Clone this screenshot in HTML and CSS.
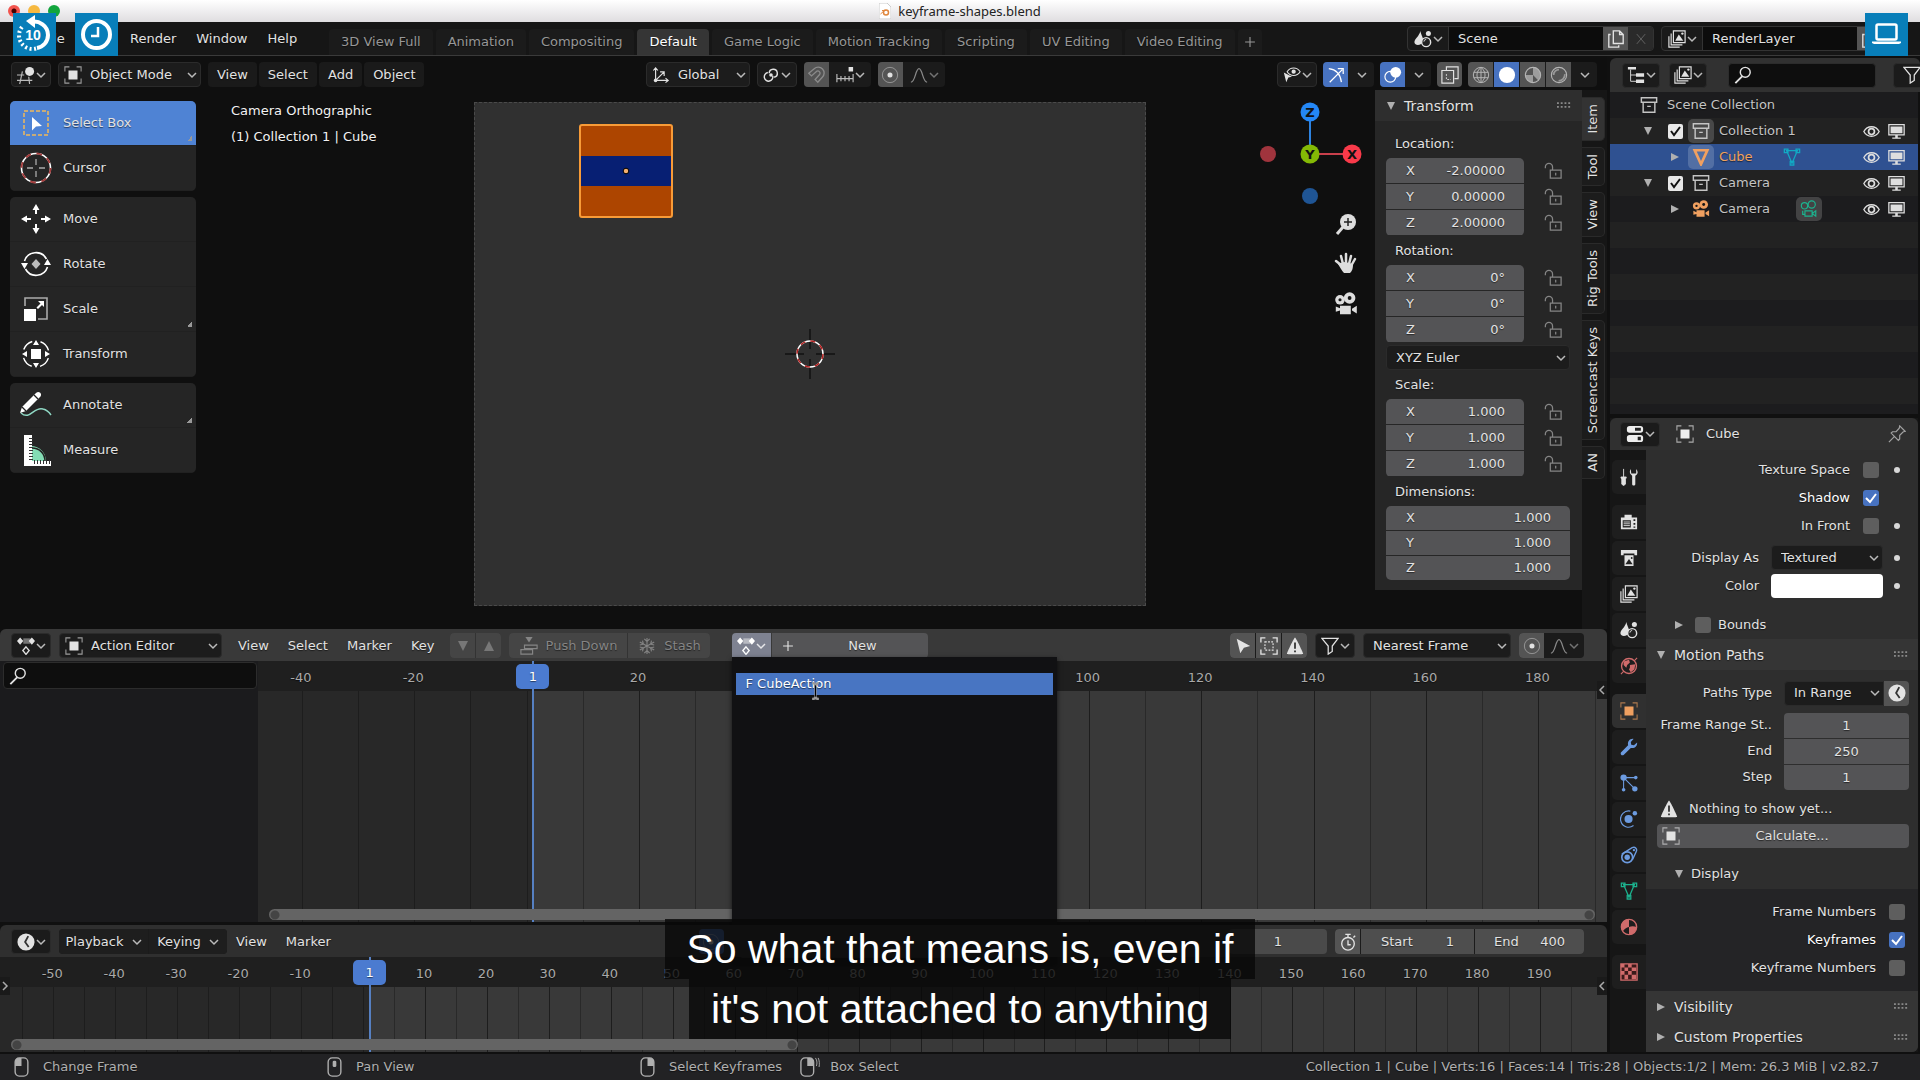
FILE: index.html
```html
<!DOCTYPE html>
<html lang="en">
<head>
<meta charset="utf-8">
<title>keyframe-shapes.blend</title>
<link rel="stylesheet" href="styles.css">
</head>
<body>
<svg class="defs" aria-hidden="true">
  <symbol id="chev" viewBox="0 0 10 10"><path d="M1 3l4 4 4-4" fill="none" stroke="currentColor" stroke-width="1.5"/></symbol>
  <symbol id="object" viewBox="0 0 20 20"><path d="M1 6V1h5M14 1h5v5M19 14v5h-5M6 19H1v-5" fill="none" stroke="currentColor" stroke-width="1.2" opacity=".65"/><path d="M5 5h10v10H5z" fill="currentColor"/></symbol>
  <symbol id="view3d" viewBox="0 0 20 20"><path d="M0 10h8M0 16h17M6 6L3 20M13 12l1 8" fill="none" stroke="currentColor" stroke-width="1.3" opacity=".8"/><circle cx="14" cy="6" r="5" fill="currentColor"/></symbol>
  <symbol id="dope" viewBox="0 0 20 20"><path d="M7 1.500h8v6H7z" fill="currentColor" opacity=".45"/><path d="M3.500.5L7 4.500l-3.500 4L0 4.500zM16.500.5l3.500 4-3.500 4-3.500-4z" fill="currentColor"/><path d="M10 11l3.500 4-3.500 4.300L6.500 15z" fill="none" stroke="currentColor" stroke-width="1.500"/></symbol>
  <symbol id="clock" viewBox="0 0 20 20"><circle cx="10" cy="10" r="9.500" fill="currentColor"/><path d="M12.500 3.500L9 10l4 5.500" fill="none" stroke="#333" stroke-width="2"/></symbol>
  <symbol id="axes" viewBox="0 0 20 20"><path d="M4 3v13h13M4 16l9-9M1.500 5L4 2l2.500 3M15 13.500l3 2.500-3 2.500M9 6.500h4.500V11" fill="none" stroke="currentColor" stroke-width="1.300"/><circle cx="4" cy="16" r="2" fill="currentColor"/></symbol>
  <symbol id="pivot" viewBox="0 0 20 20"><path d="M8 8a4.500 4.500 0 1 1 5.500 4.500M12 11a4.800 4.800 0 1 1-5.500-3.700" fill="none" stroke="currentColor" stroke-width="1.600"/><circle cx="10" cy="10" r="2" fill="currentColor"/></symbol>
  <symbol id="magnet" viewBox="0 0 20 20"><path d="M2 8l6-5a6.500 6.500 0 0 1 9 9.500L12 18l-3-3 5-5.500a2.500 2.500 0 0 0-3.500-3.500L5 11z" fill="none" stroke="currentColor" stroke-width="1.500"/></symbol>
  <symbol id="snapinc" viewBox="0 0 20 20"><path d="M1 9v9M19 9v9M1 14h18M5.500 11v6M10 11v6M14.500 11v6" fill="none" stroke="currentColor" stroke-width="1.300" opacity=".8"/><path d="M14 1h5v5h-5z" fill="currentColor"/></symbol>
  <symbol id="prop" viewBox="0 0 20 20"><circle cx="10" cy="10" r="8.500" fill="none" stroke="currentColor" opacity=".5"/><circle cx="10" cy="10" r="2.800" fill="currentColor"/></symbol>
  <symbol id="smooth" viewBox="0 0 20 20"><path d="M1 18c5 0 5-15 9-15s4 15 9 15" fill="none" stroke="currentColor" stroke-width="1.400"/></symbol>
  <symbol id="eye" viewBox="0 0 20 20"><path d="M1 10c4-7.500 14-7.500 18 0-4 7.500-14 7.500-18 0z" fill="none" stroke="currentColor" stroke-width="1.600"/><circle cx="10" cy="10" r="3.500" fill="none" stroke="currentColor" stroke-width="2"/></symbol>
  <symbol id="vis" viewBox="0 0 22 20"><path d="M5 6c4-6 12-6 16 0-4 6-12 6-16 0z" fill="none" stroke="currentColor" stroke-width="1.300"/><circle cx="13" cy="6" r="2.600" fill="currentColor"/><path d="M1 7l10 5-4.500 1L4 19z" fill="currentColor"/></symbol>
  <symbol id="gizmo" viewBox="0 0 20 20"><path d="M2 3c9 1 13 7 14 15M3 18L17 4M12 3h6v6" fill="none" stroke="currentColor" stroke-width="1.400"/></symbol>
  <symbol id="overlay" viewBox="0 0 20 20"><circle cx="13" cy="7" r="6" fill="currentColor"/><circle cx="7" cy="12" r="6" fill="none" stroke="currentColor" stroke-width="1.300"/></symbol>
  <symbol id="xray" viewBox="0 0 20 20"><path d="M6 5V1h13v13h-4M1 5h13v14H1z" fill="none" stroke="currentColor" stroke-width="1.300"/><path d="M6 9v6h5" fill="none" stroke="currentColor" stroke-dasharray="2 1.500"/></symbol>
  <symbol id="wire" viewBox="0 0 20 20"><g fill="none" stroke="currentColor" stroke-width="1.100"><circle cx="10" cy="10" r="8.500"/><path d="M2 7h16M2 13h16M10 1.500v17M10 1.500c-6 5-6 12 0 17M10 1.500c6 5 6 12 0 17"/></g></symbol>
  <symbol id="solid" viewBox="0 0 20 20"><circle cx="10" cy="10" r="9" fill="currentColor"/></symbol>
  <symbol id="matsh" viewBox="0 0 20 20"><circle cx="10" cy="10" r="8.500" fill="none" stroke="currentColor" stroke-width="1.200"/><path d="M10 1.500V10H1.500A8.500 8.500 0 0 0 10 18.500V10l6 6a8.500 8.500 0 0 0-6-14.500z" fill="currentColor" opacity=".75"/></symbol>
  <symbol id="rend" viewBox="0 0 20 20"><circle cx="10" cy="10" r="8.500" fill="none" stroke="currentColor" stroke-width="1.200"/><path d="M4 10a6 6 0 0 1 6-6M16.500 9a7 7 0 0 1-7 7.500" fill="none" stroke="currentColor" stroke-width="2" opacity=".7"/></symbol>
  <symbol id="scene" viewBox="0 0 20 20"><path d="M7 1c1 5 4 8 3 12s-9 5-9.500 1C0 10 6 7 7 1z" fill="currentColor"/><circle cx="16" cy="4" r="2.800" fill="currentColor"/><circle cx="13.500" cy="13.500" r="5" fill="#222" stroke="currentColor" stroke-width="1.600"/><path d="M11 13a2.500 2.500 0 0 1 2.500-2.500" fill="none" stroke="currentColor"/></symbol>
  <symbol id="copy" viewBox="0 0 20 20"><path d="M7 1h7l4 4v10H7zM14 1v4h4M4 5H2v14h11v-2" fill="none" stroke="currentColor" stroke-width="1.500"/></symbol>
  <symbol id="x" viewBox="0 0 20 20"><path d="M4 3l12 14M16 3L4 17" stroke="currentColor" stroke-width="1.300"/></symbol>
  <symbol id="plus" viewBox="0 0 20 20"><path d="M10 3v14M3 10h14" stroke="currentColor" stroke-width="1.600"/></symbol>
  <symbol id="layers" viewBox="0 0 20 20"><path d="M6 1h13v13H6zM3.500 4v12.500H16M1 7v12h12" fill="none" stroke="currentColor" stroke-width="1.300"/><path d="M8 12l4-7 5 7z" fill="currentColor"/><circle cx="16" cy="4" r="1.300" fill="currentColor"/></symbol>
  <symbol id="tree" viewBox="0 0 20 20"><path d="M1 1h9v3H1zM10 8h9v4h-9zM10 15h9v4h-9z" fill="currentColor"/><path d="M4 4v13h6M4 10h6" fill="none" stroke="currentColor"/></symbol>
  <symbol id="search" viewBox="0 0 20 20"><circle cx="12.500" cy="7" r="5.500" fill="none" stroke="currentColor" stroke-width="1.600"/><path d="M9 11.500L1.500 19" stroke="currentColor" stroke-width="2"/></symbol>
  <symbol id="funnel" viewBox="0 0 20 20"><path d="M1 1.500h18L12.500 10v6L8 19v-9z" fill="none" stroke="currentColor" stroke-width="1.400"/></symbol>
  <symbol id="coll" viewBox="0 0 20 20"><path d="M1.500 2h17v5h-17zM3.500 7v11h13V7M8 11.500h4" fill="none" stroke="currentColor" stroke-width="1.600"/></symbol>
  <symbol id="meshobj" viewBox="0 0 20 20"><path d="M3 2.500h14L10 18z" fill="none" stroke="currentColor" stroke-width="3"/></symbol>
  <symbol id="meshdata" viewBox="0 0 20 20"><path d="M4 3h12L10 17zM1.500 1.200h4v4h-4zM14.500 1.200h4v4h-4zM8 15h4v4H8z" fill="none" stroke="currentColor" stroke-width="1.400"/></symbol>
  <symbol id="cam" viewBox="0 0 20 20"><circle cx="5" cy="6.500" r="4" fill="currentColor"/><circle cx="13" cy="5" r="4.800" fill="currentColor"/><path d="M5 11.500h9V18.500H5v-3l-3.500 1v-4.500l3.500 1.500zM15 14l4-2.500V18l-4-2.500z" fill="currentColor"/><circle cx="5" cy="6.500" r="1.300" fill="#151515"/><circle cx="13" cy="5" r="1.600" fill="#151515"/></symbol>
  <symbol id="camdata" viewBox="0 0 20 20"><g fill="none" stroke="currentColor" stroke-width="1.300"><circle cx="5" cy="6.500" r="3.500"/><circle cx="13" cy="5" r="4"/><path d="M5.500 12h8v6h-8zM13.500 15l4-3v6zM3 12v4h2.500"/></g></symbol>
  <symbol id="monitor" viewBox="0 0 20 20"><path d="M1 2h18v12H1z" fill="none" stroke="currentColor" stroke-width="1.500"/><path d="M3 4h14v8H3zM8.500 14h3v3h-3zM5 17h10v1.500H5z" fill="currentColor"/></symbol>
  <symbol id="props" viewBox="0 0 20 20"><rect x="1" y="1" width="18" height="7.500" rx="3" fill="currentColor"/><rect x="1" y="11" width="18" height="8" rx="3" fill="currentColor"/><path d="M10 3h6.500v3.500H10zM13 13h3.500v4H13z" fill="#222"/></symbol>
  <symbol id="pin" viewBox="0 0 20 20"><path d="M1 19l6-6M13 1l6 6-2 .5-4 4 0 4-1.500 1.500-8-8L5 7.500h4l3.500-4z" fill="none" stroke="currentColor" stroke-width="1.300"/></symbol>
  <symbol id="lock" viewBox="0 0 20 20"><path d="M7 9h12v9H7zM9.500 9V5.500a4 4 0 0 0-8 0V7M13 12v3" fill="none" stroke="currentColor" stroke-width="1.400"/></symbol>
  <symbol id="tool" viewBox="0 0 20 20"><path d="M4 1v9M1 10h6l-1 3v5l-2 1.500L2 18v-5z" fill="currentColor" stroke="currentColor"/><path d="M12 1c-2 3-1 6 1.500 7.500V18c0 2 3.500 2 3.500 0V8.500C20 7 20.500 4 18 1v5h-5.500z" fill="currentColor"/></symbol>
  <symbol id="render" viewBox="0 0 20 20"><path d="M1 5h4V2h8v3h6v13H1z" fill="currentColor"/><path d="M3 8h9v8H3zM15 7h2v2h-2zM15 11h2v2h-2zM15 15h2v1.500h-2z" fill="#222"/><path d="M4 10h7M4 12h7M4 14h7" stroke="currentColor"/></symbol>
  <symbol id="output" viewBox="0 0 20 20"><path d="M1 1h18v6h-3V5H4v2H1zM5 7h10v12H5z" fill="currentColor"/><path d="M6 17l4-6 4 6z" fill="#222"/><circle cx="13" cy="10" r="1" fill="#222"/></symbol>
  <symbol id="world" viewBox="0 0 20 20"><circle cx="10" cy="10" r="8.300" fill="none" stroke="currentColor" stroke-width="1.500"/><path d="M4 5l6-2 1 3-3 3-1 3-3-3zM11 9l6-1-1 6-4 3-2-3 1-2z" fill="currentColor"/><path d="M1 19l3-3M16 4l3-3" stroke="currentColor" stroke-width="1.200"/></symbol>
  <symbol id="wrench" viewBox="0 0 20 20"><path d="M1 16l8-8c-1-4 2-7.500 6-7l-3 3.500.5 3 3 .5L19 5c.5 4-3 7-7 6l-8 8c-2 1-4-1-3-3z" fill="currentColor"/></symbol>
  <symbol id="parts" viewBox="0 0 20 20"><path d="M4 4h14M4 4v14M4 4l12 12" stroke="currentColor" stroke-width="1.200"/><circle cx="4" cy="4" r="3.500" fill="currentColor"/><circle cx="17.500" cy="4" r="2" fill="currentColor"/><circle cx="4" cy="17.500" r="2" fill="currentColor"/><circle cx="16.500" cy="16.500" r="3" fill="currentColor"/></symbol>
  <symbol id="phys" viewBox="0 0 20 20"><circle cx="9.500" cy="10" r="4.500" fill="currentColor"/><circle cx="16.500" cy="3.500" r="2.500" fill="currentColor"/><path d="M11.500 1.300a9 9 0 1 0 3.500 16" fill="none" stroke="currentColor" stroke-width="1.300"/></symbol>
  <symbol id="cons" viewBox="0 0 20 20"><path d="M2 9L13.500 1.800c3.500-1.500 6 1.700 4.500 4.500L14 15" fill="none" stroke="currentColor" stroke-width="1.500"/><circle cx="8" cy="12.500" r="6" fill="none" stroke="currentColor" stroke-width="1.800"/><circle cx="8" cy="12.500" r="3" fill="currentColor"/><circle cx="15.500" cy="4.500" r="1.300" fill="currentColor"/></symbol>
  <symbol id="mat" viewBox="0 0 20 20"><circle cx="10" cy="10" r="8.500" fill="none" stroke="currentColor" stroke-width="1.500"/><path d="M10 1.500A8.500 8.500 0 0 0 3 15c2-3 4-4.500 7-5zM10 10v8.500A8.500 8.500 0 0 0 18.500 10c-3-1-6-1-8.500 0z" fill="currentColor"/></symbol>
  <symbol id="tex" viewBox="0 0 20 20"><path d="M1 1h18v18H1z" fill="#3a1a1a" stroke="currentColor" stroke-width="1.500"/><path d="M1 1h4v4H1zM9 1h4v4H9zM5 5h4v4H5zM13 5h5v4h-5zM1 9h4v4H1zM9 9h4v4H9zM5 13h4v5H5zM13 13h5v5h-5z" fill="currentColor"/></symbol>
  <symbol id="warn" viewBox="0 0 20 20"><path d="M10 .5c1 0 9 17 9 18s-18 1-18 0 8-18 9-18z" fill="currentColor"/><path d="M10 6v7M10 15v2" stroke="#333" stroke-width="2"/></symbol>
  <symbol id="arrow" viewBox="0 0 20 20"><path d="M3 2l15 8-7 2-4 6z" fill="currentColor"/></symbol>
  <symbol id="hidden" viewBox="0 0 20 20"><path d="M1 6V1h5M14 1h5v5M19 14v5h-5M6 19H1v-5" fill="none" stroke="currentColor" stroke-width="1.500"/><path d="M5.500 5.500h9v9h-9z" fill="none" stroke="currentColor" stroke-width="1.300" stroke-dasharray="2 1.500"/></symbol>
  <symbol id="push" viewBox="0 0 20 20"><path d="M6 0h8l-4 6z" fill="currentColor"/><path d="M5 9h14v4H5zM1 14h13v5H1z" fill="none" stroke="currentColor" stroke-width="1.300"/></symbol>
  <symbol id="snow" viewBox="0 0 20 20"><path d="M10 1v18M2 5.500l16 9M2 14.500l16-9M7 2l3 3 3-3M7 18l3-3 3 3M2 9l4-1-1-4M18 9l-4-1 1-4M2 11l4 1-1 4M18 11l-4 1 1 4" fill="none" stroke="currentColor" stroke-width="1.200"/></symbol>
  <symbol id="watch" viewBox="0 0 20 20"><circle cx="10" cy="12" r="7" fill="none" stroke="currentColor" stroke-width="1.500"/><path d="M10 8v5h3M7 1.500h6M10 2v3M16 5l2-2" fill="none" stroke="currentColor" stroke-width="1.500"/></symbol>
  <symbol id="mouseL" viewBox="0 0 16 22"><rect x="1" y="1" width="14" height="20" rx="4.500" fill="none" stroke="currentColor" stroke-width="1.500"/><path d="M1 10V5a4 4 0 0 1 4-4h3v9z" fill="currentColor"/></symbol>
  <symbol id="mouseM" viewBox="0 0 16 22"><rect x="1" y="1" width="14" height="20" rx="4.500" fill="none" stroke="currentColor" stroke-width="1.500"/><rect x="6" y="4" width="4" height="7" rx="1.500" fill="currentColor"/></symbol>
  <symbol id="mouseR" viewBox="0 0 16 22"><rect x="1" y="1" width="14" height="20" rx="4.500" fill="none" stroke="currentColor" stroke-width="1.500"/><path d="M8 10V1h3a4 4 0 0 1 4 4v5z" fill="currentColor"/></symbol>
  <symbol id="mouseD" viewBox="0 0 22 22"><rect x="1" y="1" width="14" height="20" rx="4.500" fill="none" stroke="currentColor" stroke-width="1.500"/><path d="M8 10V1h3a4 4 0 0 1 4 4v5z" fill="currentColor"/><path d="M17 1c2 3 2 6 1 9M20 1c1.500 3 1.500 7 1 10" fill="none" stroke="currentColor"/></symbol>
  <symbol id="down" viewBox="0 0 10 10"><path d="M0 0h10L5 10z" fill="currentColor"/></symbol>
  <symbol id="right" viewBox="0 0 10 10"><path d="M0 0v10l10-5z" fill="currentColor"/></symbol>
  <symbol id="up" viewBox="0 0 10 10"><path d="M0 10h10L5 0z" fill="currentColor"/></symbol>
  <symbol id="grip" viewBox="0 0 16 7"><path d="M0 1h16M0 5h16" stroke="currentColor" stroke-width="2" stroke-dasharray="2 2"/></symbol>
</svg>

<header class="titlebar">
  <div class="lights"><i class="red"></i><i class="yellow"></i><i class="green"></i></div>
  <svg class="doc" viewBox="0 0 12 16"><path d="M0 0h8l4 4v12H0z" fill="#fff" stroke="#ccc"/><circle cx="7" cy="9.500" r="2.500" fill="none" stroke="#e0873e" stroke-width="1.500"/><path d="M1.500 11L6 7M3 7.500h4" stroke="#e0873e"/></svg>
  <h1>keyframe-shapes.blend</h1>
</header>

<nav class="topbar">
  <div class="menus"><a href="#">File</a><a href="#">Edit</a><a href="#">Render</a><a href="#">Window</a><a href="#">Help</a></div>
  <div class="tabs">
    <button>3D View Full</button><button>Animation</button><button>Compositing</button><button class="on">Default</button><button>Game Logic</button><button>Motion Tracking</button><button>Scripting</button><button>UV Editing</button><button>Video Editing</button><button class="add" aria-label="Add workspace"><svg class="i14"><use href="#plus"/></svg></button>
  </div>
  <div class="idblocks">
    <div class="idblock"><button class="drop"><svg class="i"><use href="#scene"/></svg><svg class="c"><use href="#chev"/></svg></button><input aria-label="Scene" value="Scene"><button class="lit"><svg class="i"><use href="#copy"/></svg></button><button class="faint"><svg class="i14"><use href="#x"/></svg></button></div>
    <div class="idblock"><button class="drop"><svg class="i"><use href="#layers"/></svg><svg class="c"><use href="#chev"/></svg></button><input aria-label="View layer" value="RenderLayer"><button class="lit"><svg class="i"><use href="#copy"/></svg></button><button class="faint"><svg class="i14"><use href="#x"/></svg></button></div>
  </div>
</nav>

<main class="workspace">
  <div class="left">
    <section class="view3d">
      <div class="vhead">
        <div class="cluster">
          <button class="drop box"><svg class="i"><use href="#view3d"/></svg><svg class="c"><use href="#chev"/></svg></button>
          <div class="pick mode"><svg class="i"><use href="#object"/></svg><select aria-label="Mode"><option>Object Mode</option></select></div>
          <div class="vmenus"><button>View</button><button>Select</button><button>Add</button><button>Object</button></div>
        </div>
        <div class="gap2"></div>
        <div class="cluster">
          <div class="pick orient"><svg class="i"><use href="#axes"/></svg><select aria-label="Orientation"><option>Global</option></select></div>
          <button class="drop box"><svg class="i"><use href="#pivot"/></svg><svg class="c"><use href="#chev"/></svg></button>
          <div class="joined"><button class="lit dim"><svg class="i"><use href="#magnet"/></svg></button><button class="drop"><svg class="i"><use href="#snapinc"/></svg><svg class="c"><use href="#chev"/></svg></button></div>
          <div class="joined"><button class="lit"><svg class="i"><use href="#prop"/></svg></button><button class="drop dim"><svg class="i"><use href="#smooth"/></svg><svg class="c"><use href="#chev"/></svg></button></div>
        </div>
        <div class="gap3"></div>
        <div class="cluster tight">
          <button class="drop box"><svg class="i"><use href="#vis"/></svg><svg class="c"><use href="#chev"/></svg></button>
          <div class="joined"><button class="blue"><svg class="i"><use href="#gizmo"/></svg></button><button><svg class="c"><use href="#chev"/></svg></button></div>
          <div class="joined"><button class="blue"><svg class="i"><use href="#overlay"/></svg></button><button><svg class="c"><use href="#chev"/></svg></button></div>
          <div class="joined"><button class="lit"><svg class="i"><use href="#xray"/></svg></button></div>
          <div class="joined"><button class="lit soft"><svg class="i"><use href="#wire"/></svg></button><button class="blue"><svg class="i"><use href="#solid"/></svg></button><button class="lit soft"><svg class="i"><use href="#matsh"/></svg></button><button class="lit soft"><svg class="i"><use href="#rend"/></svg></button><button><svg class="c"><use href="#chev"/></svg></button></div>
        </div>
      </div>
      <div class="vbody">
        <div class="tools">
          <div class="toolgroup">
            <button class="on more"><svg viewBox="0 0 34 34"><path d="M5 5h24v24H5z" fill="none" stroke="#f0b95a" stroke-width="1.500" stroke-dasharray="4 2"/><path d="M13 11l10 9-6 .5-4 4z" fill="#fff"/></svg>Select Box</button>
            <button><svg viewBox="0 0 34 34"><circle cx="17" cy="17" r="14.500" fill="none" stroke="#fff" stroke-width="1.600"/><circle cx="17" cy="17" r="14.500" fill="none" stroke="#a33a3a" stroke-width="1.800" stroke-dasharray="5.700 5.700"/><path d="M17 8v6M17 20v6M8 17h6M20 17h6" stroke="#aaa" stroke-width="1.300"/></svg>Cursor</button>
          </div>
          <div class="toolgroup">
            <button><svg viewBox="0 0 34 34"><path d="M17 2l3.500 6h-7zM17 32l3.500-6h-7zM2 17l6-3.500v7zM32 17l-6-3.500v7z" fill="#fff"/><path d="M17 7v5M17 22v5M7 17h5M22 17h5" stroke="#fff" stroke-width="2"/></svg>Move</button>
            <button><svg viewBox="0 0 34 34"><path d="M5.500 14a12 12 0 0 1 22-2M28.500 20a12 12 0 0 1-22 2" fill="none" stroke="#fff" stroke-width="1.600"/><path d="M2 16h7l-3.500 6zM25 18h7l-3.500-6z" fill="#fff"/><path d="M17 12l4.500 5-4.500 5-4.500-5z" fill="#bbb"/></svg>Rotate</button>
            <button class="more"><svg viewBox="0 0 34 34"><path d="M6 14V6h22v21h-9" fill="none" stroke="#aaa" stroke-width="1.600"/><path d="M5 17h12v12H5zM25 9v6l-2-2-4 4-1.500-1.500 4-4L19 9z" fill="#fff"/></svg>Scale</button>
            <button><svg viewBox="0 0 34 34"><circle cx="17" cy="17" r="13" fill="none" stroke="#fff" stroke-width="1.500" stroke-dasharray="12 8.420" stroke-dashoffset="-4.200"/><path d="M12 12h10v10H12zM17 3l3 5h-6zM17 31l3-5h-6zM3 17l5-3v6zM31 17l-5-3v6z" fill="#fff"/></svg>Transform</button>
          </div>
          <div class="toolgroup">
            <button class="more"><svg viewBox="0 0 34 34"><path d="M2 25c9 8 13-7 22-4 4 1 6 3 8 6" fill="none" stroke="#8fd8c4" stroke-width="1.500"/><path d="M1 25l2-6 14-14c3-3 7 1 4 4L7 23z" fill="#fff"/><path d="M15 7l4 4M3 19l4 4" stroke="#222" stroke-width="1.300"/></svg>Annotate</button>
            <button><svg viewBox="0 0 34 34"><path d="M13 13a15 15 0 0 1 14 15H13z" fill="#83dcb4"/><path d="M13 15c8 0 13 6 13 13" fill="none" stroke="#222" stroke-width="1.500"/><path d="M5 2h8v31H5zM5 28h27v5H5z" fill="#fff"/><path d="M12 5v22" stroke="#333" stroke-width="4" stroke-dasharray="1 2"/><path d="M15 29h17" stroke="#333" stroke-width="4" stroke-dasharray="1 2"/></svg>Measure</button>
          </div>
        </div>
        <div class="vinfo"><p>Camera Orthographic</p><p>(1) Collection 1 | Cube</p></div>
        <div class="camframe">
          <svg viewBox="0 0 670 502">
            <path d="M105 22h92v92h-92z" fill="#ad4500"/><path d="M105 53h92v30h-92z" fill="#071f73"/><rect x="105" y="22" width="92" height="92" rx="2" fill="none" stroke="#f89b37" stroke-width="2"/><circle cx="151" cy="68" r="2.800" fill="#f5b070" stroke="#000"/>
            <path d="M335 226v20M335 256v20M310 251h19M341 251h19" stroke="#000" stroke-width="1"/><circle cx="335" cy="251" r="13" fill="none" stroke="#fff" stroke-width="1.500"/><circle cx="335" cy="251" r="13" fill="none" stroke="#b32020" stroke-width="1.500" stroke-dasharray="5.100 5.100"/>
          </svg>
        </div>
        <div class="navcol">
          <svg class="axis" viewBox="0 0 108 108"><path d="M54 12v42" stroke="#2e83e0" stroke-width="2"/><path d="M54 54h42" stroke="#c9404c" stroke-width="2"/><circle cx="12" cy="54" r="8" fill="#a0343d"/><circle cx="54" cy="96" r="8" fill="#1f5595"/><circle cx="54" cy="12" r="9.500" fill="#2487f5"/><circle cx="54" cy="54" r="9.500" fill="#84b905"/><circle cx="96" cy="54" r="9.500" fill="#f93a4a"/><g class="axl"><text x="54" y="17">Z</text><text x="54" y="59">Y</text><text x="96" y="59">X</text></g></svg>
          <button aria-label="Zoom"><svg viewBox="0 0 24 24"><circle cx="14" cy="10" r="8" fill="#ddd"/><path d="M9 15l-6 7" stroke="#ddd" stroke-width="3"/><path d="M14 6v8M10 10h8" stroke="#222" stroke-width="1.500"/></svg></button>
          <button aria-label="Pan"><svg viewBox="0 0 24 24"><path d="M7 13L2 9M9 12L7 4M12 11V2M15 12l2-8M17 14l4-7" stroke="#ddd" stroke-width="2.500" stroke-linecap="round"/><path d="M6 11l5-1 8 2c0 5-1 7-3 9h-6c-2-2-4-6-6-9z" fill="#ddd"/></svg></button>
          <button aria-label="Camera view"><svg viewBox="0 0 20 20" color="#ddd"><use href="#cam"/></svg></button>
        </div>
        <aside class="npanel">
          <h2><svg class="t"><use href="#down"/></svg>Transform<svg class="grip"><use href="#grip"/></svg></h2>
          <h3>Location:</h3>
          <div class="frow"><div class="fields"><label>X<input value="-2.00000"></label><label>Y<input value="0.00000"></label><label>Z<input value="2.00000"></label></div><div class="locks"><svg><use href="#lock"/></svg><svg><use href="#lock"/></svg><svg><use href="#lock"/></svg></div></div>
          <h3>Rotation:</h3>
          <div class="frow"><div class="fields"><label>X<input value="0°"></label><label>Y<input value="0°"></label><label>Z<input value="0°"></label></div><div class="locks"><svg><use href="#lock"/></svg><svg><use href="#lock"/></svg><svg><use href="#lock"/></svg></div></div>
          <div class="pick euler"><select aria-label="Rotation mode"><option>XYZ Euler</option></select></div>
          <h3>Scale:</h3>
          <div class="frow"><div class="fields"><label>X<input value="1.000"></label><label>Y<input value="1.000"></label><label>Z<input value="1.000"></label></div><div class="locks"><svg><use href="#lock"/></svg><svg><use href="#lock"/></svg><svg><use href="#lock"/></svg></div></div>
          <h3>Dimensions:</h3>
          <div class="frow dims"><div class="fields"><label>X<input value="1.000"></label><label>Y<input value="1.000"></label><label>Z<input value="1.000"></label></div></div>
        </aside>
        <div class="ntabs"><button class="on"><span>Item</span></button><button><span>Tool</span></button><button><span>View</span></button><button><span>Rig Tools</span></button><button><span>Screencast Keys</span></button><button><span>AN</span></button></div>
      </div>
    </section>

    <section class="action">
      <div class="ehead">
        <button class="drop box"><svg class="i"><use href="#dope"/></svg><svg class="c"><use href="#chev"/></svg></button>
        <div class="pick actmode"><svg class="i"><use href="#object"/></svg><select aria-label="Editor mode"><option>Action Editor</option></select></div>
        <div class="emenus"><a href="#">View</a><a href="#">Select</a><a href="#">Marker</a><a href="#">Key</a></div>
        <div class="joined off"><button><svg class="t"><use href="#down"/></svg></button><button><svg class="t"><use href="#up"/></svg></button></div>
        <div class="joined off"><button class="push"><svg class="i"><use href="#push"/></svg>Push Down</button><button class="stash"><svg class="i"><use href="#snow"/></svg>Stash</button></div>
        <div class="actionpick">
          <button class="drop open"><svg class="i"><use href="#dope"/></svg><svg class="c"><use href="#chev"/></svg></button>
          <button class="new"><svg class="i14"><use href="#plus"/></svg><span>New</span></button>
          <div class="popup">
            <button>F CubeAction</button>
            <svg class="ibeam" viewBox="0 0 8 16"><path d="M1 1c2 0 3 1 3 2 0-1 1-2 3-2M4 3v10M1 15c2 0 3-1 3-2 0 1 1 2 3 2" fill="none" stroke="#999" stroke-width="2"/><path d="M4 3v10" stroke="#000"/></svg>
            <div class="searchbox"><svg class="i"><use href="#search"/></svg><input type="search" aria-label="Filter actions"></div>
          </div>
        </div>
        <div class="joined push-right"><button class="lit"><svg class="i"><use href="#arrow"/></svg></button><button class="lit"><svg class="i"><use href="#hidden"/></svg></button><button class="lit"><svg class="i"><use href="#warn"/></svg></button></div>
        <button class="drop box"><svg class="i"><use href="#funnel"/></svg><svg class="c"><use href="#chev"/></svg></button>
        <div class="pick snap"><select aria-label="Snap"><option>Nearest Frame</option></select></div>
        <div class="joined tail"><button class="lit"><svg class="i"><use href="#prop"/></svg></button><button class="drop dim"><svg class="i"><use href="#smooth"/></svg><svg class="c"><use href="#chev"/></svg></button></div>
      </div>
      <div class="ebody">
        <div class="channels"><div class="searchbox"><svg class="i"><use href="#search"/></svg><input type="search" aria-label="Filter channels"></div></div>
        <div class="graph g-action">
          <div class="future" style="--f:1"></div>
          <i class="tick" style="--f:-40"><b>-40</b></i><i class="tick minor" style="--f:-30"></i><i class="tick" style="--f:-20"><b>-20</b></i><i class="tick minor" style="--f:-10"></i><i class="tick" style="--f:0"></i><i class="tick minor" style="--f:10"></i><i class="tick" style="--f:20"><b>20</b></i><i class="tick minor" style="--f:30"></i><i class="tick" style="--f:100"><b>100</b></i><i class="tick minor" style="--f:110"></i><i class="tick" style="--f:120"><b>120</b></i><i class="tick minor" style="--f:130"></i><i class="tick" style="--f:140"><b>140</b></i><i class="tick minor" style="--f:150"></i><i class="tick" style="--f:160"><b>160</b></i><i class="tick minor" style="--f:170"></i><i class="tick" style="--f:180"><b>180</b></i><i class="tick minor" style="--f:190"></i>
          <i class="playhead" style="--f:1"><b>1</b></i>
          <i class="handle hr"><svg><use href="#chev"/></svg></i>
          <div class="scroll"></div>
        </div>
      </div>
    </section>

    <section class="timeline">
      <div class="ehead">
        <button class="drop box"><svg class="i"><use href="#clock"/></svg><svg class="c"><use href="#chev"/></svg></button>
        <div class="joined tmenus"><button>Playback<svg class="c"><use href="#chev"/></svg></button><button>Keying<svg class="c"><use href="#chev"/></svg></button></div>
        <div class="emenus"><a href="#">View</a><a href="#">Marker</a></div>
        <button class="rec blue" aria-label="Auto keying"><svg class="i"><use href="#prop"/></svg></button>
        <label class="frame"><input aria-label="Current frame" value="1"></label>
        <div class="joined range"><button class="lit"><svg class="i"><use href="#watch"/></svg></button><label>Start<input value="1"></label><label>End<input value="400"></label></div>
      </div>
      <div class="graph g-time">
        <div class="future" style="--f:1"></div>
        <i class="tick minor" style="--f:-55"></i><i class="tick" style="--f:-50"><b>-50</b></i><i class="tick minor" style="--f:-45"></i><i class="tick" style="--f:-40"><b>-40</b></i><i class="tick minor" style="--f:-35"></i><i class="tick" style="--f:-30"><b>-30</b></i><i class="tick minor" style="--f:-25"></i><i class="tick" style="--f:-20"><b>-20</b></i><i class="tick minor" style="--f:-15"></i><i class="tick" style="--f:-10"><b>-10</b></i><i class="tick minor" style="--f:-5"></i><i class="tick" style="--f:0"></i><i class="tick minor" style="--f:5"></i><i class="tick" style="--f:10"><b>10</b></i><i class="tick minor" style="--f:15"></i><i class="tick" style="--f:20"><b>20</b></i><i class="tick minor" style="--f:25"></i><i class="tick" style="--f:30"><b>30</b></i><i class="tick minor" style="--f:35"></i><i class="tick" style="--f:40"><b>40</b></i><i class="tick minor" style="--f:45"></i><i class="tick" style="--f:50"><b>50</b></i><i class="tick minor" style="--f:55"></i><i class="tick" style="--f:60"><b>60</b></i><i class="tick minor" style="--f:65"></i><i class="tick" style="--f:70"><b>70</b></i><i class="tick minor" style="--f:75"></i><i class="tick" style="--f:80"><b>80</b></i><i class="tick minor" style="--f:85"></i><i class="tick" style="--f:90"><b>90</b></i><i class="tick minor" style="--f:95"></i><i class="tick" style="--f:100"><b>100</b></i><i class="tick minor" style="--f:105"></i><i class="tick" style="--f:110"><b>110</b></i><i class="tick minor" style="--f:115"></i><i class="tick" style="--f:120"><b>120</b></i><i class="tick minor" style="--f:125"></i><i class="tick" style="--f:130"><b>130</b></i><i class="tick minor" style="--f:135"></i><i class="tick" style="--f:140"><b>140</b></i><i class="tick minor" style="--f:145"></i><i class="tick" style="--f:150"><b>150</b></i><i class="tick minor" style="--f:155"></i><i class="tick" style="--f:160"><b>160</b></i><i class="tick minor" style="--f:165"></i><i class="tick" style="--f:170"><b>170</b></i><i class="tick minor" style="--f:175"></i><i class="tick" style="--f:180"><b>180</b></i><i class="tick minor" style="--f:185"></i><i class="tick" style="--f:190"><b>190</b></i><i class="tick minor" style="--f:195"></i>
        <i class="playhead" style="--f:1"><b>1</b></i>
        <i class="handle hl"><svg><use href="#chev"/></svg></i><i class="handle hr"><svg><use href="#chev"/></svg></i>
        <div class="scroll"></div>
      </div>
    </section>
  </div>

  <div class="rightcol">
    <section class="outliner">
      <div class="ohead">
        <button class="drop box"><svg class="i"><use href="#tree"/></svg><svg class="c"><use href="#chev"/></svg></button>
        <button class="drop box"><svg class="i"><use href="#layers"/></svg><svg class="c"><use href="#chev"/></svg></button>
        <div class="searchbox"><svg class="i"><use href="#search"/></svg><input type="search" aria-label="Filter outliner"></div>
        <button class="drop box filter" aria-label="Filter"><svg class="i"><use href="#funnel"/></svg></button>
      </div>
      <ul class="rows">
        <li class="root"><svg class="i"><use href="#coll"/></svg>Scene Collection</li>
        <li class="l1"><svg class="t"><use href="#down"/></svg><input type="checkbox" checked aria-label="Collection 1"><span class="ico act"><svg class="i"><use href="#coll"/></svg></span>Collection 1<span class="vis"><svg><use href="#eye"/></svg><svg><use href="#monitor"/></svg></span></li>
        <li class="l2 sel"><svg class="t"><use href="#right"/></svg><span class="ico act orange"><svg class="i"><use href="#meshobj"/></svg></span><span class="cube">Cube</span><svg class="i data cyan"><use href="#meshdata"/></svg><span class="vis"><svg><use href="#eye"/></svg><svg><use href="#monitor"/></svg></span></li>
        <li class="l1"><svg class="t"><use href="#down"/></svg><input type="checkbox" checked aria-label="Camera"><span class="ico"><svg class="i"><use href="#coll"/></svg></span>Camera<span class="vis"><svg><use href="#eye"/></svg><svg><use href="#monitor"/></svg></span></li>
        <li class="l2"><svg class="t"><use href="#right"/></svg><span class="ico orange"><svg class="i"><use href="#cam"/></svg></span>Camera<span class="ico act green data"><svg class="i"><use href="#camdata"/></svg></span><span class="vis"><svg><use href="#eye"/></svg><svg><use href="#monitor"/></svg></span></li>
      </ul>
    </section>
    <section class="properties">
      <div class="phead"><button class="drop box"><svg class="i"><use href="#props"/></svg><svg class="c"><use href="#chev"/></svg></button><svg class="i"><use href="#object"/></svg><span>Cube</span><button class="pin" aria-label="Pin"><svg class="i"><use href="#pin"/></svg></button></div>
      <div class="pmain">
        <div class="ptabs">
          <button><svg class="i"><use href="#tool"/></svg></button>
          <button class="sep"><svg class="i"><use href="#render"/></svg></button>
          <button><svg class="i"><use href="#output"/></svg></button>
          <button><svg class="i"><use href="#layers"/></svg></button>
          <button><svg class="i"><use href="#scene"/></svg></button>
          <button class="pink"><svg class="i"><use href="#world"/></svg></button>
          <button class="sep on orange"><svg class="i"><use href="#object"/></svg></button>
          <button class="sky"><svg class="i"><use href="#wrench"/></svg></button>
          <button class="sky"><svg class="i"><use href="#parts"/></svg></button>
          <button class="sky"><svg class="i"><use href="#phys"/></svg></button>
          <button class="sky"><svg class="i"><use href="#cons"/></svg></button>
          <button class="green"><svg class="i"><use href="#meshdata"/></svg></button>
          <button class="pink"><svg class="i"><use href="#mat"/></svg></button>
          <button class="sep pink"><svg class="i"><use href="#tex"/></svg></button>
        </div>
        <div class="pbody">
          <div class="checks">
            <label>Texture Space<input type="checkbox"><i class="dot"></i></label>
            <label class="set">Shadow<input type="checkbox" checked><i class="dot none"></i></label>
            <label>In Front<input type="checkbox"><i class="dot"></i></label>
          </div>
          <div class="prow"><label for="disp">Display As</label><div class="pick"><select id="disp"><option>Textured</option></select></div><i class="dot"></i></div>
          <div class="prow"><label for="col">Color</label><button id="col" class="swatch"></button><i class="dot"></i></div>
          <div class="sub bounds"><svg class="t"><use href="#right"/></svg><label><input type="checkbox">Bounds</label></div>
          <h2><svg class="t"><use href="#down"/></svg>Motion Paths<svg class="grip"><use href="#grip"/></svg></h2>
          <div class="paths">
            <div class="mrow type"><label for="ptype">Paths Type</label><div class="pick"><select id="ptype"><option>In Range</option></select></div><button class="lit"><svg class="i"><use href="#clock"/></svg></button></div>
            <div class="mrow start"><label for="fs">Frame Range St..</label><input id="fs" value="1"></div>
            <div class="mrow"><label for="fe">End</label><input id="fe" value="250"></div>
            <div class="mrow step"><label for="fp">Step</label><input id="fp" value="1"></div>
            <p class="note"><svg class="i"><use href="#warn"/></svg>Nothing to show yet...</p>
            <button class="calc"><svg class="i"><use href="#object"/></svg><span>Calculate...</span></button>
          </div>
          <div class="sub"><svg class="t"><use href="#down"/></svg>Display</div>
          <div class="checks dark">
            <label>Frame Numbers<input type="checkbox"></label>
            <label class="set">Keyframes<input type="checkbox" checked></label>
            <label>Keyframe Numbers<input type="checkbox"></label>
          </div>
          <h2><svg class="t"><use href="#right"/></svg>Visibility<svg class="grip"><use href="#grip"/></svg></h2>
          <h2><svg class="t"><use href="#right"/></svg>Custom Properties<svg class="grip"><use href="#grip"/></svg></h2>
        </div>
      </div>
    </section>
  </div>
</main>

<footer class="status">
  <span class="hint"><svg><use href="#mouseL"/></svg>Change Frame</span>
  <span class="hint"><svg><use href="#mouseM"/></svg>Pan View</span>
  <span class="hint short"><svg><use href="#mouseR"/></svg>Select Keyframes</span>
  <span class="hint last"><svg class="wide"><use href="#mouseD"/></svg>Box Select</span>
  <span class="stats">Collection 1 | Cube | Verts:16 | Faces:14 | Tris:28 | Objects:1/2 | Mem: 26.3 MiB | v2.82.7</span>
</footer>

<button class="badge back" aria-label="Back 10 seconds"><svg viewBox="0 0 43 43"><path d="M18 9c8-2 17 4 17 13 0 7-5 12-11 13" fill="none" stroke="#fff" stroke-width="4"/><path d="M22 2v13l-9-7z" fill="#fff"/><path d="M23 35.500A13.500 13.500 0 0 1 9 14" fill="none" stroke="#fff" stroke-width="4" stroke-dasharray="2 2.500"/><text x="20" y="27">10</text></svg></button>
<button class="badge time" aria-label="Speed"><svg viewBox="0 0 43 43"><circle cx="21.500" cy="21.500" r="13.500" fill="none" stroke="#fff" stroke-width="4"/><path d="M23 14v9h-7" fill="none" stroke="#fff" stroke-width="2.500"/></svg></button>
<button class="badge screen" aria-label="Screen"><svg viewBox="0 0 43 43"><rect x="11.500" y="11.500" width="20" height="15" rx="1.500" fill="none" stroke="#fff" stroke-width="2.500"/><path d="M7 28.500h29v1.500l-2 1H9l-2-1z" fill="#fff"/></svg></button>
<p class="caption"><span>So what that means is, even if</span><span>it's not attached to anything</span></p>
</body>
</html>
```
FILE: styles.css
```css
* { box-sizing: border-box; }
body { margin: 0; min-height: 100vh; display: flex; flex-direction: column; position: relative; background: #101010; color: #e2e2e2; font: 13px/16px "DejaVu Sans", sans-serif; text-shadow: 0 1px 1px #0008; overflow-x: hidden; }
h1, h2, h3, p, ul { margin: 0; padding: 0; font: inherit; }
i { font-style: normal; }
b { font-weight: normal; }
a { color: inherit; text-decoration: none; }
button, input, select { font: inherit; color: inherit; text-shadow: inherit; border: 0; margin: 0; padding: 0; background: none; border-radius: 0; min-width: 0; outline: 0; }
button { display: flex; align-items: center; justify-content: center; white-space: nowrap; }
select { appearance: none; }
svg { display: block; flex: none; }
.defs { position: absolute; width: 0; height: 0; }
.i { width: 18px; height: 18px; }
.i14 { width: 14px; height: 14px; }
.c { width: 10px; height: 10px; opacity: .8; }
.t { width: 8px; height: 8px; color: #b0b0b0; }
.grip { width: 15px; height: 7px; color: #8a8a8a; }

/* Window title bar */
.titlebar { height: 22px; display: flex; align-items: center; justify-content: center; gap: 7px; background: linear-gradient(#fff, #dfdde0); color: #222; position: relative; font-family: "Noto Sans", sans-serif; text-shadow: none; }
.titlebar .doc { width: 12px; height: 16px; }
.lights { position: absolute; left: 8px; top: 5px; display: flex; gap: 8px; }
.lights i { width: 12px; height: 12px; border-radius: 6px; }
.red { background: radial-gradient(#400 2px, #f2544e 3px); }
.yellow { background: #f6b940; }
.green { background: #12a53d; }

/* Top bar */
.topbar { height: 34px; display: flex; background: #161616; border-bottom: 1px solid #3a3a3a; padding-right: 12px; }
.menus { display: flex; gap: 20px; align-items: center; width: 329px; padding-left: 43px; }
.tabs { display: flex; gap: 3px; padding-top: 7px; }
.tabs button { padding: 0 12px; background: #1b1b1b; color: #979797; border-radius: 4px 4px 0 0; }
.tabs .on { background: #353535; color: #fff; }
.tabs .add { padding: 0 5px; }
.idblocks { margin-left: auto; display: flex; gap: 7px; align-items: center; }
.idblock { display: flex; height: 25px; border-radius: 4px; overflow: hidden; border: 1px solid #333; background: #1a1a1a; }
.idblock input { width: 155px; background: #0c0c0c; padding-left: 9px; border-left: 1px solid #333; }
.idblock button { width: 25px; }
.idblock .drop { width: 40px; }
.idblock .faint { background: #2a2a2a; color: #666; }

/* Shared controls */
.drop { gap: 1px; }
.lit { background: #545454; }
.soft { color: #b5b5b5; }
.dim { color: #8a8a8a; }
.blue { background: #4772c0; color: #fff; }
.box { width: 40px; height: 25px; border-radius: 4px; background: #1b1b1b; border: 1px solid #2b2b2b; flex: none; }
.pick { height: 25px; border-radius: 4px; background: #1c1c1c; border: 1px solid #2b2b2b; display: flex; align-items: center; padding-left: 5px; gap: 3px; }
.pick select { flex: 1; height: 23px; padding-left: 5px; background: url("data:image/svg+xml,%3Csvg xmlns='http://www.w3.org/2000/svg' width='10' height='10'%3E%3Cpath d='M1 3l4 4 4-4' fill='none' stroke='%23bbb' stroke-width='1.500'/%3E%3C/svg%3E") right 3px center no-repeat; }
.joined { display: flex; height: 25px; border-radius: 4px; overflow: hidden; background: #1b1b1b; gap: 1px; flex: none; }
.joined button { width: 25px; }
.joined .drop { width: 41px; }
.searchbox { display: flex; align-items: center; background: #0e0e0e; border: 1px solid #2c2c2c; border-radius: 4px; height: 25px; padding-left: 5px; }
.searchbox input { flex: 1; }

.workspace { flex: 1; display: flex; gap: 3px; padding-bottom: 2px; }
.left { flex: 1; min-width: 0; display: flex; flex-direction: column; }

/* 3D viewport */
.view3d { flex: 1; display: flex; flex-direction: column; background: #0f0f0f; }
.vhead { height: 34px; display: flex; align-items: center; padding: 3px 10px 0 11px; }
.cluster { display: flex; gap: 7px; }
.tight { gap: 6px; }
.gap2 { flex: 2; }
.gap3 { flex: 3; }
.mode { width: 143px; }
.orient { width: 104px; }
.vmenus { display: flex; gap: 2px; }
.vmenus button { height: 25px; padding: 0 9px; border-radius: 4px; background: #1a1a1a; }
.vbody { flex: 1; display: flex; }
.tools { width: 186px; margin: 11px 35px 0 10px; display: flex; flex-direction: column; gap: 6px; flex: none; }
.toolgroup { border-radius: 5px; overflow: hidden; background: #252525; }
.toolgroup button { width: 100%; height: 45px; justify-content: flex-start; gap: 10px; padding-left: 9px; border-bottom: 1px solid #212121; }
.toolgroup svg { width: 34px; height: 34px; }
.toolgroup .on { background-color: #4f83d4; }
.toolgroup .more { background-image: linear-gradient(135deg, transparent 50%, #999 50%); background-size: 5px 5px; background-repeat: no-repeat; background-position: right 4px bottom 4px; }
.vinfo { width: 243px; padding-top: 8px; line-height: 26px; color: #f2f2f2; flex: none; }
.camframe { flex: 1; margin: 12px 0 23px; background: #303030; border: 1px dashed #4a4a4a; }
.camframe svg { width: 100%; height: 100%; }
.navcol { width: 229px; display: flex; flex-direction: column; align-items: flex-end; gap: 16px; padding: 10px 17px 0 0; }
.axis { width: 108px; height: 108px; margin: 0 -6px -12px 0; }
.axl { font: 700 13px "DejaVu Sans", sans-serif; text-anchor: middle; fill: #111; text-shadow: none; }
.navcol button, .navcol button svg { width: 24px; height: 24px; }

/* Sidebar of the viewport */
.npanel { width: 207px; background: #262626; padding: 0 12px 10px 11px; align-self: flex-start; flex: none; }
.npanel h2, .pbody h2 { display: flex; align-items: center; font-size: 14px; gap: 9px; }
.npanel h2 { height: 31px; margin: 0 -12px 8px -11px; padding: 0 10px 0 12px; background: #2e2e2e; }
h2 .grip { margin-left: auto; }
h3 { height: 29px; padding: 7px 0 0 9px; }
.frow { display: flex; gap: 20px; }
.fields { flex: 1; border-radius: 5px; overflow: hidden; display: flex; flex-direction: column; gap: 1px; }
.fields label { height: 25px; background: #545456; display: flex; align-items: center; padding: 0 19px 0 20px; }
.dims label { height: 24px; }
.fields input { flex: 1; width: 20px; text-align: right; }
.locks { width: 26px; }
.locks svg { width: 18px; height: 26px; color: #858585; }
.euler { margin-top: 2px; padding-left: 4px; }
.ntabs { width: 25px; background: #161616; padding: 7px 2px 0 0; display: flex; flex-direction: column; gap: 6px; flex: none; }
.ntabs button { width: 23px; padding: 6px 0; background: #1c1c1c; border: 1px solid #2a2a2a; border-left: 0; border-radius: 0 5px 5px 0; }
.ntabs .on { background: #333; }
.ntabs span { writing-mode: vertical-rl; transform: rotate(180deg); }

/* Action editor and timeline */
.action { display: flex; flex-direction: column; border-radius: 6px; background: #1e1e1e; margin-bottom: 3px; position: relative; z-index: 2; }
.ehead { height: 32px; display: flex; align-items: center; gap: 8px; padding: 1px 23px 0 11px; background: #393939; border-radius: 6px 6px 0 0; position: relative; z-index: 3; }
.timeline .ehead { background: #2f2f2f; }
.actmode { width: 163px; }
.emenus { display: flex; gap: 19px; padding: 0 8px; }
.off { background: #333; color: #858585; }
.off button { background: #454545; }
.off .t { color: #777; width: 12px; height: 10px; }
.joined .push { width: 118px; gap: 8px; }
.joined .stash { width: 82px; gap: 8px; }
.actionpick { display: flex; gap: 1px; height: 25px; margin-left: 14px; position: relative; }
.actionpick .open { width: 39px; background: #7e8291; color: #fff; border-radius: 4px 0 0 0; }
.actionpick .new { width: 156px; background: #545456; border-radius: 0 4px 4px 0; padding: 0 9px; }
.new span { flex: 1; padding-left: 10px; }
.popup { position: absolute; left: 0; top: 24px; width: 325px; height: 307px; padding: 16px 4px 6px; background: #111113; display: flex; flex-direction: column; justify-content: space-between; box-shadow: 0 2px 5px #000a; }
.popup button { height: 22px; background: #4875c2; color: #fff; justify-content: flex-start; padding-left: 9px; }
.popup .searchbox { margin: 0 3px; background: #242424; }
.ibeam { position: absolute; left: 79px; top: 25px; width: 9px; height: 18px; }
.push-right { margin-left: auto; }
.snap { width: 148px; padding-left: 4px; }
.tail .drop { width: 39px; }
.ebody { display: flex; height: 261px; }
.channels { width: 258px; padding: 1px 1px 0 3px; background: #1b1b1d; flex: none; }
.channels .searchbox { height: 27px; }
.graph { flex: 1; position: relative; overflow: hidden; background: linear-gradient(#1f1f1f 30px, #282828 30px); }
.g-action { --from: -47.8; --span: 240; }
.g-time { --from: -58.6; --span: 259.4; height: 95px; flex: none; }
.future, .tick, .playhead { position: absolute; left: calc((var(--f) - var(--from)) / var(--span) * 100%); top: 0; bottom: 0; }
.future { right: 0; top: 30px; background: #393939; }
.tick { width: 1px; }
.tick::after { content: ""; position: absolute; left: 0; width: 1px; top: 30px; bottom: 0; background: #1d1d1d; }
.minor::after { background: #0004; }
.tick b { position: absolute; left: -31px; width: 60px; top: 9px; text-align: center; color: #a9a9a9; }
.playhead { width: 2px; background: #5680c2; }
.playhead b { position: absolute; left: -16px; top: 3px; width: 33px; line-height: 25px; text-align: center; background: #4b7bd0; border-radius: 5px; color: #fff; }
.scroll { position: absolute; left: 11px; right: 12px; bottom: 2px; height: 11px; border-radius: 6px; background: radial-gradient(circle at 6px 6px, #444 4px, transparent 5px), radial-gradient(circle at calc(100% - 6px) 6px, #444 4px, transparent 5px), #646464; }
.g-time .scroll { right: auto; width: 49%; }
.handle { position: absolute; top: 20px; width: 10px; height: 18px; background: #1a1a1a; color: #aaa; display: flex; align-items: center; justify-content: center; }
.handle svg { width: 10px; height: 10px; }
.hl { left: 0; }
.hr { right: 0; }
.hl svg { transform: rotate(-90deg); }
.hr svg { transform: rotate(90deg); }
.tmenus button { background: #1e1e1e; width: 89px; gap: 8px; }
.tmenus button + button { width: 78px; }
.tmenus + .emenus { padding: 0 0 0 1px; }
.rec { width: 25px; height: 25px; border-radius: 4px; margin-left: 360px; }
.frame { margin-left: auto; }
.frame input { width: 98px; height: 25px; border-radius: 4px; background: #4a4a4a; text-align: center; }
.range label { display: flex; align-items: center; background: #4e4e4e; width: 113px; padding: 0 20px 0 20px; }
.range label + label { width: 109px; padding: 0 19px; }
.range input { flex: 1; width: 20px; text-align: right; }

/* Outliner */
.rightcol { width: 310px; flex: none; display: flex; flex-direction: column; gap: 4px; padding-top: 2px; }
.outliner { flex: 1; display: flex; flex-direction: column; }
.ohead { height: 34px; display: flex; align-items: center; gap: 9px; background: #313131; padding-left: 12px; border-radius: 6px 6px 0 0; overflow: hidden; }
.ohead .searchbox { width: 148px; margin: 0 8px 0 12px; }
.ohead .box { width: 38px; }
.rows { flex: 1; list-style: none; margin-right: 2px; background: repeating-linear-gradient(#1c1c1e 0 26px, #222 26px 52px); }
.rows li { height: 26px; display: flex; align-items: center; padding-right: 13px; color: #c4c4c4; }
.root { padding-left: 30px; gap: 9px; }
.rows .l1 { padding-left: 34px; }
.rows .l2 { padding-left: 61px; }
.rows input { appearance: none; width: 15px; height: 15px; margin: 0 5px 0 16px; background: #e8e8e8 url("data:image/svg+xml,%3Csvg xmlns='http://www.w3.org/2000/svg' viewBox='0 0 15 15'%3E%3Cpath d='M3 7l3 4 6-8' fill='none' stroke='%23111' stroke-width='2'/%3E%3C/svg%3E"); border-radius: 2px; }
.ico { width: 26px; height: 24px; margin-right: 5px; display: flex; align-items: center; justify-content: center; border-radius: 5px; }
.l2 .t + .ico { margin-left: 9px; }
.act { background: #ffffff2c; }
.sel { background: #2f5191; }
.rows .cube { color: #f0a25c; }
.data { margin-left: 30px; }
.ico.data { margin-left: 26px; }
.vis { margin-left: auto; display: flex; gap: 8px; color: #dedede; }
.vis svg { width: 17px; height: 17px; }
.orange { color: #f0a060; }
.cyan { color: #12a9c4; }
.green { color: #1cb28e; }
.pink { color: #d06b6b; }
.sky { color: #6c9be0; }

/* Properties editor */
.properties { background: #161616; margin-right: 2px; }
.phead { height: 32px; display: flex; align-items: center; background: #303030; padding: 0 12px 0 10px; border-radius: 6px 6px 0 0; gap: 12px; }
.phead .box { margin-right: 4px; }
.phead .i { color: #eee; }
.pin { margin-left: auto; opacity: .6; }
.pmain { display: flex; }
.ptabs { width: 36px; padding: 10px 0 0 2px; display: flex; flex-direction: column; gap: 2px; }
.ptabs button { height: 34px; background: #1e1e1e; border-radius: 5px 0 0 5px; }
.ptabs .sep { margin-top: 9px; }
.ptabs .on { background: #303030; }
.pbody { flex: 1; background: #2e2e2e; padding-top: 6px; border-radius: 0 0 6px 0; overflow: hidden; }
.checks label { height: 28px; display: flex; align-items: center; justify-content: flex-end; padding-right: 18px; }
.checks .set { color: #fff; }
.checks input, .bounds input { appearance: none; width: 16px; height: 16px; border-radius: 3px; background: #5e5e5e; margin-left: 13px; }
.checks input:checked { background: #4772c0 url("data:image/svg+xml,%3Csvg xmlns='http://www.w3.org/2000/svg' viewBox='0 0 16 16'%3E%3Cpath d='M3 8l4 4 6-8' fill='none' stroke='%23fff' stroke-width='2'/%3E%3C/svg%3E"); }
.dot { width: 6px; height: 6px; border-radius: 3px; background: #d8d8d8; margin-left: 15px; flex: none; }
.none { background: none; }
.prow { display: flex; align-items: center; height: 25px; padding-right: 18px; margin-bottom: 3px; }
.prow label { flex: 1; text-align: right; padding-right: 12px; }
.prow .pick, .swatch { width: 112px; }
.prow .dot { margin-left: 11px; }
.checks + .prow { margin-top: 5px; }
.pbody .pick { padding-left: 4px; }
.swatch { height: 24px; background: #fff; border-radius: 4px; }
.sub { height: 30px; display: flex; align-items: center; padding-left: 29px; gap: 8px; }
.sub.bounds { margin-top: 12px; height: 29px; }
.bounds label { display: flex; align-items: center; gap: 7px; }
.bounds input { margin-left: 4px; }
.pbody h2 { height: 31px; background: #353535; padding: 0 9px 0 11px; gap: 9px; }
.pbody h2:last-child { height: 30px; }
.paths { padding: 10px 9px 11px 11px; }
.mrow { display: flex; align-items: center; height: 26px; }
.mrow label { flex: 1; text-align: right; padding-right: 12px; white-space: nowrap; }
.mrow input { width: 125px; height: 25px; background: #545456; text-align: center; }
.type { margin-bottom: 6px; }
.type .pick { width: 100px; border-radius: 4px 0 0 4px; }
.type button { width: 25px; height: 25px; border-radius: 0 4px 4px 0; }
.start input { border-radius: 4px 4px 0 0; }
.step input { border-radius: 0 0 4px 4px; }
.note { display: flex; align-items: center; gap: 11px; padding-left: 3px; height: 31px; margin-top: 3px; }
.calc { width: 100%; height: 24px; background: #545456; border-radius: 4px; padding: 0 5px; }
.calc span { flex: 1; }
.dark { background: #242426; padding: 9px 0; }
.dark label { padding-right: 13px; }

/* Status bar */
.status { height: 26px; display: flex; align-items: center; background: #222224; color: #b0b0b0; padding: 0 41px 0 14px; }
.hint { width: 313px; display: flex; align-items: center; gap: 14px; }
.hint svg { width: 15px; height: 20px; }
.hint .wide { width: 20px; }
.short { width: auto; margin-right: 18px; }
.last { width: auto; gap: 10px; }
.stats { margin-left: auto; }

/* Player overlays */
.badge { position: absolute; top: 13px; width: 43px; height: 43px; background: #087eb9; z-index: 4; }
.badge svg { width: 43px; height: 43px; }
.badge text { font: 700 14px "Liberation Sans", sans-serif; fill: #fff; text-anchor: middle; text-shadow: none; }
.back { left: 13px; }
.time { left: 75px; }
.screen { right: 12px; }
.caption { position: absolute; left: 0; right: 0; bottom: 41px; z-index: 5; display: flex; flex-direction: column; align-items: center; font: 41px/60px "Liberation Sans", sans-serif; color: #fff; text-shadow: none; pointer-events: none; }
.caption span { background: #080808cc; padding: 0 22px; }
```
